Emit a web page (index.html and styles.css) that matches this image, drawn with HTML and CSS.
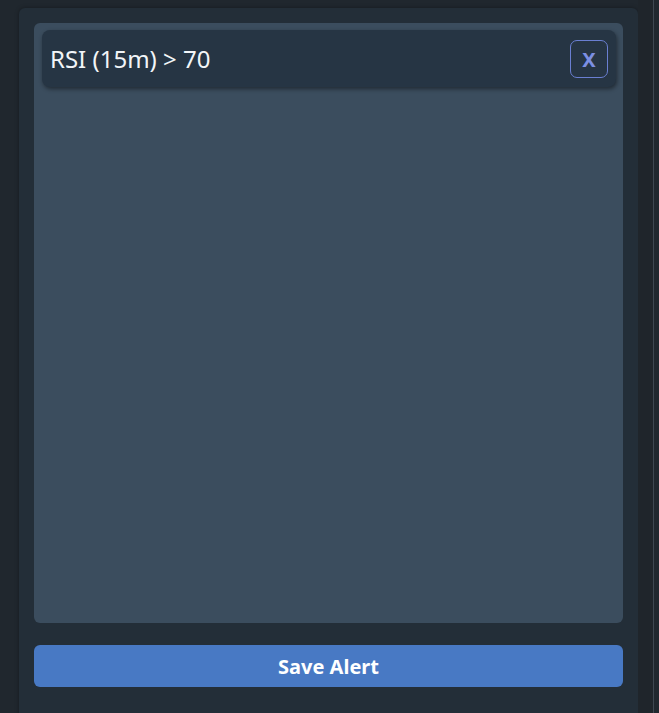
FILE: index.html
```html
<!DOCTYPE html>
<html>
<head>
<meta charset="utf-8">
<link rel="stylesheet" href="styles.css">
</head>
<body>
<div class="page">
  <div class="panel">
    <div class="list">
      <div class="item">
        <span class="item-text">RSI (15m) &gt; 70</span>
        <button class="remove">X</button>
      </div>
    </div>
    <button class="save">Save Alert</button>
  </div>
  <div class="gutter"></div>
  <div class="edge"></div>
</div>
</body>
</html>
```
FILE: styles.css
```css
html, body {
  margin: 0;
  padding: 0;
  height: 100%;
  background: #20272e;
  font-family: "Noto Sans", "Open Sans", sans-serif;
  overflow: hidden;
}
.page {
  display: flex;
  height: 713px;
  padding-left: 19px;
  box-sizing: border-box;
}
.panel {
  width: 619px;
  margin-top: 8px;
  height: 740px;
  background: #232e38;
  border-radius: 6px;
  padding: 15px;
  box-sizing: border-box;
  display: flex;
  flex-direction: column;
  gap: 22px;
  box-shadow: 0 0 4px rgba(0,0,0,0.35);
  flex-shrink: 0;
}
.list {
  height: 600px;
  background: #3b4d5e;
  border-radius: 6px;
  padding: 7px 7px 7px 8px;
  box-sizing: border-box;
}
.item {
  height: 57px;
  background: #263544;
  border-radius: 8px;
  display: flex;
  align-items: center;
  justify-content: space-between;
  padding: 0 8px 0 8px;
  box-shadow: 1px 2px 4px rgba(0,0,0,0.45);
}
.item-text {
  color: #f2f5f8;
  font-size: 24px;
}
.remove {
  width: 38px;
  height: 38px;
  border: 1px solid #6a7fd2;
  border-radius: 7px;
  background: transparent;
  color: #7c8fe2;
  font-family: "Noto Sans", sans-serif;
  font-weight: 700;
  font-size: 20px;
  padding: 0;
  margin-top: 1px;
}
.save {
  height: 42px;
  border: none;
  border-radius: 6px;
  background: #4879c4;
  color: #ffffff;
  font-family: "Noto Sans", sans-serif;
  font-weight: 700;
  font-size: 20px;
  padding: 0;
}
.gutter {
  width: 15px;
  flex-shrink: 0;
  background: #1f252b;
}
.edge {
  width: 1px;
  flex-shrink: 0;
  background: #3e4751;
}
```
